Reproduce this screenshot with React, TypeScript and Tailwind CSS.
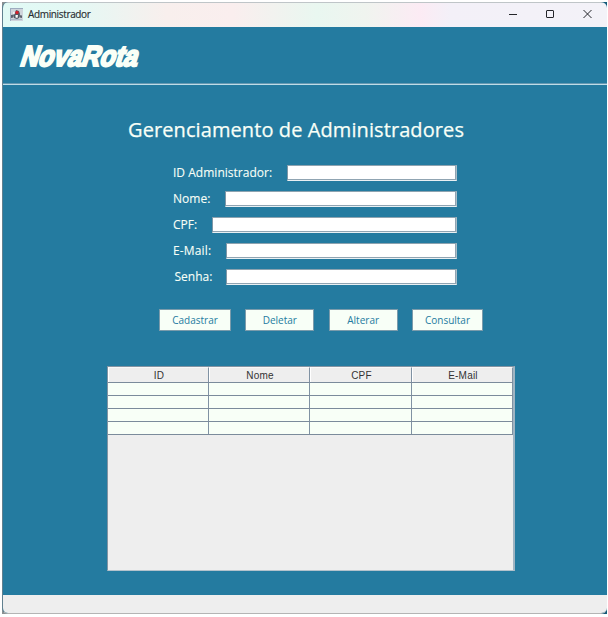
import React from "react";

const fields = [
  { label: "ID Administrador:", box: "w-[170px]", text: "pl-[173px] tracking-[0.02px]" },
  { label: "Nome:", box: "w-[232px]", text: "pl-[173px] tracking-[0.05px]" },
  { label: "CPF:", box: "w-[245px]", text: "pl-[173px] tracking-[0px]" },
  { label: "E-Mail:", box: "w-[231px]", text: "pl-[173px] tracking-[0.15px]" },
  { label: "Senha:", box: "w-[231px]", text: "pl-[174.5px] tracking-[0px]" },
];

const buttons = [
  { label: "Cadastrar", width: "w-[72px]" },
  { label: "Deletar", width: "w-[69px]" },
  { label: "Alterar", width: "w-[69px]" },
  { label: "Consultar", width: "w-[71px]" },
];

const columns = [
  { label: "ID", width: "w-[101px]" },
  { label: "Nome", width: "w-[101px]" },
  { label: "CPF", width: "w-[102px]" },
  { label: "E-Mail", width: "w-[101px]" },
];

function JavaIcon() {
  return (
    <svg width="13" height="13" viewBox="0 0 13 13" className="-mt-0.5 shrink-0">
      <rect width="13" height="13" fill="#cfd4db" />
      <path d="M0 0H13V1H1V13H0Z" fill="#9eacbf" />
      <path d="M1 11H12V12H1Z" fill="#adb9c9" />
      <path d="M5 5L6 2L9 3L10 6L9 10L7 11L4 10L4 7Z" fill="#515966" />
      <path d="M5.5 7L8 7L7.5 10L5.5 9.5Z" fill="#fafafa" />
      <circle cx="7" cy="4.5" r="1.7" fill="#d3202c" />
      <path d="M1 7L4 6.5L3.5 9.5L1 10ZM9 7L12 7.5V10L9.5 9.5Z" fill="#5b626d" />
      <path d="M3 4h1.5v2H3Z" fill="#f1f3f5" />
    </svg>
  );
}

function TitleBar() {
  return (
    <header className="flex h-[25px] shrink-0 items-center border-t border-[#bfc5c8] bg-[linear-gradient(90deg,#e1faf5_0%,#e4f8f4_12%,#f8efed_27%,#faeeee_38%,#e9f7f0_52%,#f0f4ef_60%,#fcebf4_69%,#f3f0f8_74%,#f3f2f8_100%)] pl-[7px] text-[#282c30]">
      <JavaIcon />
      <span className="-mt-0.5 ml-[5px] whitespace-nowrap text-[10px] leading-4 tracking-[-0.35px] [-webkit-text-stroke:0.15px_#282c30]">
        Administrador
      </span>
      <svg width="84" height="13" viewBox="0 0 84 13" className="-mt-[3px] ml-auto mr-3.5" fill="none" stroke="#24252a">
        <path d="M0 7.5H8" />
        <rect x="37.5" y="3.5" width="7" height="7" rx=".5" />
        <path d="M74.5 3L82.5 11M82.5 3L74.5 11" />
      </svg>
    </header>
  );
}

function Logo() {
  return (
    <svg width="150" height="50" className="ml-[10px] block overflow-visible" role="img" aria-label="NovaRota">
      <text
        transform="translate(6 39) skewX(-18)"
        x="0"
        y="0"
        textLength="117"
        lengthAdjust="spacingAndGlyphs"
        fill="#fafff7"
        stroke="#fafff7"
        strokeWidth="2.2"
        fontFamily="'Liberation Sans', sans-serif"
        fontWeight="700"
        fontSize="29"
      >
        NovaRota
      </text>
    </svg>
  );
}

function Table() {
  return (
    <div className="ml-[104px] mt-[35px] h-[205px] w-[408px] border-y border-l border-r-2 border-[#8294a3] border-b-[#b4c2cc] border-r-[#9fb4c2] bg-[#eee] font-['Liberation_Sans',sans-serif] text-[10px] text-[#333]">
      <div className="flex h-4 w-[405px] border-b border-[#7b8b9b]">
        {columns.map((c) => (
          <div key={c.label} className={`${c.width} border-l border-t border-r border-l-white border-t-[#f8f8f8] border-r-[#8092a3] pl-px pt-[2px] text-center leading-3 tracking-[0.2px]`}>
            {c.label}
          </div>
        ))}
      </div>
      {[0, 1, 2, 3].map((r) => (
        <div key={r} className="flex h-[13px] w-[405px] border-b border-[#7b8b9b] bg-[#f8fff7]">
          {columns.map((c) => (
            <div key={c.label} className={`${c.width} border-r border-[#8092a3]`} />
          ))}
        </div>
      ))}
    </div>
  );
}

export default function App() {
  return (
    <div className="h-[617px] w-[608px] overflow-hidden bg-white pl-0.5 pt-0.5 font-['Open_Sans',sans-serif]">
      <div className="h-[612px] w-[605px] bg-[linear-gradient(90deg,#8b9092_0%,#8b9092_85%,#155a78_94%)]">
        <div className="flex h-[612px] w-[605px] flex-col overflow-hidden rounded-[6px] border-b border-l border-b-[#b4b4b4] border-l-[#61808f] bg-[#247ba0]">
          <TitleBar />
          <div className="h-[58px] shrink-0 border-b border-[#bfdce7] shadow-[inset_0_-1px_#6799b2]">
            <Logo />
          </div>
          <main className="flex h-[510px] shrink-0 flex-col text-[#f8fff7]">
            <h1 className="ml-[125px] mt-[29px] h-8 whitespace-nowrap text-[20px] font-normal leading-8 tracking-[0.09px] [-webkit-text-stroke:0.25px_#f8fff7]">
              Gerenciamento de Administradores
            </h1>
            <form className="mt-[19px] flex w-[454px] flex-col gap-2.5">
              {fields.map((f) => (
                <div key={f.label} className="flex h-4 items-center justify-between">
                  <label className={`${f.text} -ml-[3px] whitespace-nowrap text-[12px] leading-4 [-webkit-text-stroke:0.1px_#f8fff7]`}>{f.label}</label>
                  <div className={`${f.box} h-4 border border-b-[#e9f0f3] border-l-[#7d96a6] border-r-[#aabfca] border-t-[#8da3b0] bg-white shadow-[inset_-1px_-1px_#90a4b2]`} />
                </div>
              ))}
            </form>
            <div className="ml-[156px] mt-6 flex w-[324px] justify-between">
              {buttons.map((b) => (
                <button key={b.label} className={`${b.width} h-[22px] whitespace-nowrap border border-[#7b9bab] bg-[#f8fff7] text-[10px] leading-5 text-[#247ba0]`}>
                  {b.label}
                </button>
              ))}
            </div>
            <Table />
          </main>
          <footer className="min-h-0 flex-1 bg-[#eee]" />
        </div>
      </div>
    </div>
  );
}
